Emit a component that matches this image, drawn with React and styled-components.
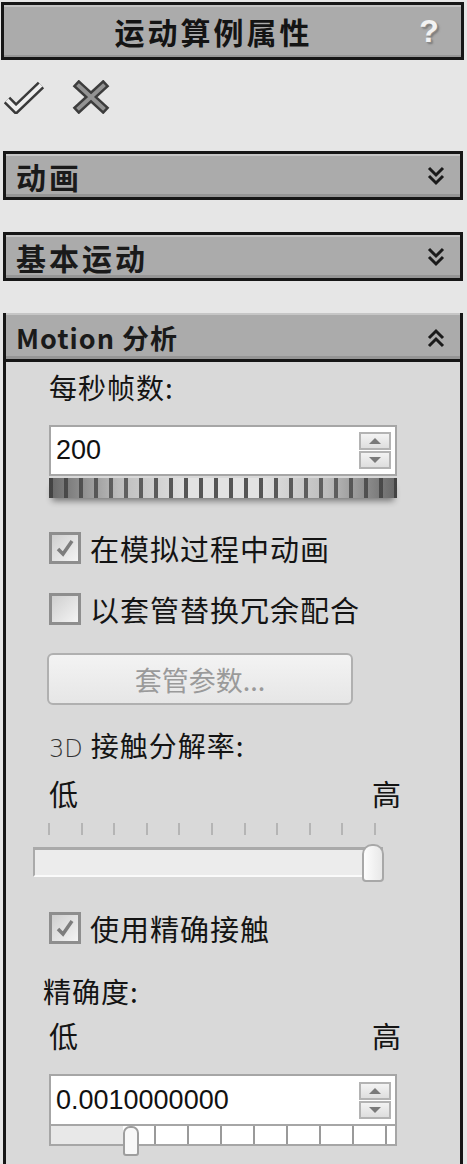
import React from 'react'
import styled, { createGlobalStyle } from 'styled-components'

const GlobalStyle = createGlobalStyle`
  html, body {
    margin: 0;
    padding: 0;
    background: #e6e6e6;
    font-family: "Noto Sans CJK SC", "Noto Sans", sans-serif;
    color: #141414;
  }
`

const Page = styled.div`
  width: 467px;
  height: 1164px;
  overflow: hidden;
  padding: 2px 4px 0 3px;
  box-sizing: border-box;
  display: flex;
  flex-direction: column;
  & > * {
    flex-shrink: 0;
  }
`

const TitleBar = styled.div`
  height: 58px;
  margin-left: -2px;
  margin-right: -1px;
  box-sizing: border-box;
  border: 3px solid #161616;
  background: #ababab;
  box-shadow: inset 0 2px 0 #c4c4c4, inset 0 -2px 0 #979797;
  display: flex;
  align-items: center;
`

const Title = styled.div`
  flex: 1;
  text-align: center;
  padding-left: 14px;
  font-size: 30px;
  font-weight: 700;
  letter-spacing: 3px;
  line-height: 1;
`

const Help = styled.span`
  width: 40px;
  margin-right: 12px;
  text-align: center;
  font-family: "Liberation Sans", sans-serif;
  font-size: 32px;
  font-weight: 700;
  color: #f2f2f2;
  text-shadow: 1px 1px 0 #8a8a8a, 2px 2px 2px #777;
`

const ActionRow = styled.div`
  height: 91px;
  display: flex;
  align-items: flex-start;
  padding-top: 20px;
  box-sizing: border-box;
  gap: 27px;
`

const SectionBar = styled.div`
  height: 49px;
  margin-top: ${p => p.$gap || 0}px;
  box-sizing: border-box;
  border: 3px solid #161616;
  background: #ababab;
  box-shadow: inset 0 2px 0 #c6c6c6, inset 0 -3px 0 #959595;
  display: flex;
  align-items: center;
  justify-content: space-between;
  padding: 0 14px 0 10px;
`

const SectionTitle = styled.span`
  font-size: 30px;
  font-weight: 700;
  letter-spacing: 3px;
  line-height: 1;
  color: #1a1a1a;
`

const MotionTitle = styled(SectionTitle)`
  font-size: 27px;
  letter-spacing: 1px;
`

const Panel = styled.div`
  margin-top: 32px;
  border: 3px solid #161616;
  border-bottom: none;
  flex: 1 0 auto;
  display: flex;
  flex-direction: column;
  background: #d9d9d9;
`

const PanelHead = styled(SectionBar)`
  border: none;
  border-bottom: 3px solid #161616;
  height: 49px;
  margin: -3px 0 0;
  padding-top: 3px;
  flex-shrink: 0;
`

const Body = styled.div`
  display: flex;
  flex-direction: column;
  padding: 0 0 40px 43px;
  & > * {
    flex-shrink: 0;
  }
`

const Label = styled.div`
  height: 30px;
  line-height: 30px;
  margin-top: ${p => p.$mt}px;
  margin-left: ${p => p.$ml || 0}px;
  font-size: 28px;
  letter-spacing: 1px;
  white-space: nowrap;
`

const Thin = styled.span`
  font-family: "DejaVu Sans", sans-serif;
  font-weight: 300;
  font-size: 24px;
  color: #333;
  margin-right: 8px;
  letter-spacing: 0;
`

const LowHigh = styled.div`
  width: 352px;
  height: 30px;
  line-height: 30px;
  margin-top: ${p => p.$mt}px;
  display: flex;
  justify-content: space-between;
  font-size: 29px;
`

const SpinBox = styled.div`
  width: 348px;
  height: ${p => p.$h}px;
  margin-top: ${p => p.$mt}px;
  box-sizing: border-box;
  border: 2px solid #a6a6a6;
  background: #fff;
  display: flex;
  align-items: center;
  justify-content: space-between;
  padding: 0 4px 0 5px;
`

const SpinValue = styled.span`
  font-family: "Liberation Sans", sans-serif;
  font-size: 27px;
  color: #111;
`

const SpinButtons = styled.div`
  display: flex;
  flex-direction: column;
  gap: 1px;
`

const SpinButton = styled.div`
  width: 32px;
  height: 18px;
  box-sizing: border-box;
  border: 2px solid #b3b3b3;
  background: linear-gradient(#f3f3f3, #dedede);
  display: flex;
  align-items: center;
  justify-content: center;
  &::after {
    content: '';
    border-left: 6px solid transparent;
    border-right: 6px solid transparent;
    ${p => p.$up ? 'border-bottom: 6px solid #7a7a7a;' : 'border-top: 6px solid #7a7a7a;'}
  }
`

const Thumbwheel = styled.div`
  width: 348px;
  height: 20px;
  margin-top: 2px;
  background:
    linear-gradient(90deg, rgba(60,60,60,0.75) 0%, rgba(120,120,120,0.35) 20%, rgba(255,255,255,0) 40%, rgba(255,255,255,0) 60%, rgba(120,120,120,0.35) 80%, rgba(60,60,60,0.75) 100%),
    repeating-linear-gradient(90deg, #555 0 4px, #e2e2e2 4px 15px);
  box-shadow: 0 6px 6px -3px rgba(0,0,0,0.45);
`

const CheckRow = styled.label`
  display: flex;
  align-items: center;
  height: 32px;
  margin-top: ${p => p.$mt}px;
  font-size: 29px;
  letter-spacing: 1px;
  white-space: nowrap;
`

const Box = styled.span`
  width: 32px;
  height: 32px;
  box-sizing: border-box;
  border: 3px solid #8e8e8e;
  background: linear-gradient(135deg, #cfcfcf, #f4f4f4);
  margin-right: 9px;
  display: flex;
  align-items: center;
  justify-content: center;
`

const GhostButton = styled.div`
  width: 306px;
  height: 52px;
  margin-top: 28px;
  margin-left: -2px;
  box-sizing: border-box;
  border: 2px solid #b0b0b0;
  border-radius: 6px;
  background: linear-gradient(#f3f3f3, #e6e6e6);
  color: #9a9a9a;
  font-size: 27px;
  display: flex;
  align-items: center;
  justify-content: center;
`

const Ticks = styled.div`
  width: 328px;
  height: 12px;
  margin-top: 15px;
  margin-left: -1px;
  display: flex;
  justify-content: space-between;
  span {
    width: 2px;
    height: 12px;
    background: #b5b5b5;
  }
`

const Track = styled.div`
  position: relative;
  width: 350px;
  height: 30px;
  margin-top: 12px;
  margin-left: -16px;
  box-sizing: border-box;
  border-top: 3px solid #aaa;
  border-left: 2px solid #aaa;
  border-bottom: 2px solid #fafafa;
  background: #ececec;
`

const Thumb = styled.div`
  position: absolute;
  right: -1px;
  top: -6px;
  width: 22px;
  height: 38px;
  box-sizing: border-box;
  border: 2px solid #a8a8a8;
  border-radius: 10px 10px 4px 4px;
  background: linear-gradient(90deg, #fdfdfd, #e8e8e8);
`

const TickBar = styled.div`
  position: relative;
  width: 348px;
  height: 20px;
  box-sizing: border-box;
  border: 2px solid #a6a6a6;
  border-top: none;
  background:
    linear-gradient(90deg, #e8e8e8 0 72px, transparent 72px),
    repeating-linear-gradient(90deg, #fff 0 31px, #9a9a9a 31px 33px, #fff 33px);
  background-position: 0 0, 6px 0;
`

const SmallThumb = styled.div`
  position: absolute;
  left: 72px;
  top: 0;
  width: 16px;
  height: 30px;
  box-sizing: border-box;
  border: 2px solid #9e9e9e;
  border-radius: 7px 7px 3px 3px;
  background: #f8f8f8;
`

const Chevrons = ({ up }) => (
  <svg width="20" height="24" viewBox="0 0 20 24">
    <g fill="none" stroke="#1a1a1a" strokeWidth="3" transform={up ? 'rotate(180 10 12)' : undefined}>
      <polyline points="3,4 10,11 17,4" />
      <polyline points="3,12 10,19 17,12" />
    </g>
  </svg>
)

const OkIcon = () => (
  <svg width="42" height="34" viewBox="0 0 42 34">
    <polyline points="4,20 13,29 38,5" fill="none" stroke="#3a3a3a" strokeWidth="9" strokeLinejoin="miter" />
    <polyline points="4,20 13,29 38,5" fill="none" stroke="#eeeeee" strokeWidth="4" />
  </svg>
)

const CancelIcon = () => (
  <svg width="38" height="34" viewBox="0 0 38 34">
    <g strokeLinecap="square">
      <path d="M7 6 L31 28 M31 6 L7 28" stroke="#3c3c3c" strokeWidth="9" />
      <path d="M7 6 L31 28 M31 6 L7 28" stroke="#939393" strokeWidth="4" />
    </g>
  </svg>
)

const Tick = () => (
  <svg width="20" height="20" viewBox="0 0 20 20">
    <polyline points="3,11 8,16 17,3" fill="none" stroke="#7d7d7d" strokeWidth="3.5" />
  </svg>
)

const Check = ({ checked, mt, children }) => (
  <CheckRow $mt={mt}>
    <Box>{checked && <Tick />}</Box>
    {children}
  </CheckRow>
)

export default function App() {
  return (
    <Page>
      <GlobalStyle />
      <TitleBar>
        <Title>运动算例属性</Title>
        <Help>?</Help>
      </TitleBar>

      <ActionRow>
        <OkIcon />
        <CancelIcon />
      </ActionRow>

      <SectionBar>
        <SectionTitle>动画</SectionTitle>
        <Chevrons />
      </SectionBar>

      <SectionBar $gap={32}>
        <SectionTitle>基本运动</SectionTitle>
        <Chevrons />
      </SectionBar>

      <Panel>
        <PanelHead>
          <MotionTitle>Motion 分析</MotionTitle>
          <Chevrons up />
        </PanelHead>
        <Body>
          <Label $mt={10}>每秒帧数:</Label>
          <SpinBox $mt={23} $h={51}>
            <SpinValue>200</SpinValue>
            <SpinButtons>
              <SpinButton $up />
              <SpinButton />
            </SpinButtons>
          </SpinBox>
          <Thumbwheel />

          <Check checked mt={34}>在模拟过程中动画</Check>
          <Check mt={29}>以套管替换冗余配合</Check>

          <GhostButton>套管参数...</GhostButton>

          <Label $mt={25}><Thin>3D</Thin>接触分解率:</Label>
          <LowHigh $mt={18}><span>低</span><span>高</span></LowHigh>
          <Ticks>
            {Array.from({ length: 11 }).map((_, i) => <span key={i} />)}
          </Ticks>
          <Track>
            <Thumb />
          </Track>

          <Check checked mt={35}>使用精确接触</Check>

          <Label $mt={32} $ml={-6}>精确度:</Label>
          <LowHigh $mt={14}><span>低</span><span>高</span></LowHigh>
          <SpinBox $mt={24} $h={52}>
            <SpinValue>0.0010000000</SpinValue>
            <SpinButtons>
              <SpinButton $up />
              <SpinButton />
            </SpinButtons>
          </SpinBox>
          <TickBar>
            <SmallThumb />
          </TickBar>
        </Body>
      </Panel>
    </Page>
  )
}
